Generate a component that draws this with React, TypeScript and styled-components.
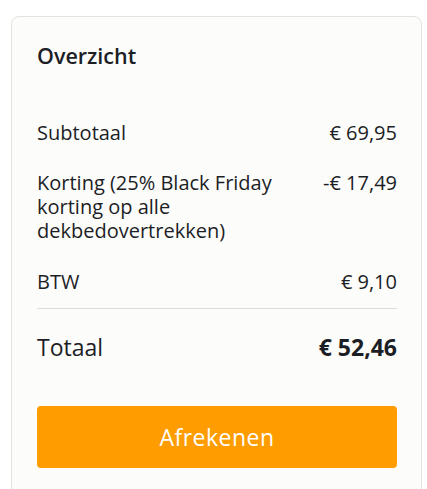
import React from "react";
import styled, { createGlobalStyle } from "styled-components";

const Global = createGlobalStyle`
  html, body { margin: 0; padding: 0; background: #ffffff; }
  body { font-family: "Open Sans", "Noto Sans", sans-serif; color: #1c1e26; }
  * { box-sizing: border-box; }
`;

const Page = styled.div`
  padding: 16px 5px 0 11px;
`;

const Card = styled.section`
  background: #fcfcfa;
  border: 1px solid #e2e2df;
  border-radius: 8px;
  padding: 24px 24px 40px 25px;
  min-height: 500px;
`;

const Title = styled.h2`
  margin: 0 0 49.5px 0;
  font-size: 21.5px;
  font-weight: 600;
  line-height: 30px;
`;

const Row = styled.div`
  display: flex;
  justify-content: space-between;
  align-items: flex-start;
  gap: 20px;
  font-size: 20px;
  line-height: 24.3px;
  margin-bottom: 26px;
`;

const TotalRow = styled(Row)`
  font-size: 23px;
  line-height: 30px;
  margin-bottom: 44.5px;
`;

const Label = styled.span`
  max-width: 260px;
`;

const Value = styled.span<{ $bold?: boolean }>`
  white-space: nowrap;
  font-weight: ${(p) => (p.$bold ? 700 : 400)};
`;

const Divider = styled.hr`
  border: none;
  border-top: 1px solid #dcdcd8;
  margin: -11.5px 0 22.5px 0;
`;

const Button = styled.button`
  display: block;
  width: 100%;
  height: 62px;
  border: none;
  border-radius: 4px;
  background: #ff9c00;
  color: #ffffff;
  font-family: inherit;
  font-size: 23px;
  letter-spacing: 0.5px;
  cursor: pointer;
`;

export default function App() {
  return (
    <>
      <Global />
      <Page>
        <Card>
          <Title>Overzicht</Title>
          <Row>
            <Label>Subtotaal</Label>
            <Value>€ 69,95</Value>
          </Row>
          <Row>
            <Label>Korting (25% Black Friday korting op alle dekbedovertrekken)</Label>
            <Value>-€ 17,49</Value>
          </Row>
          <Row>
            <Label>BTW</Label>
            <Value>€ 9,10</Value>
          </Row>
          <Divider />
          <TotalRow>
            <Label>Totaal</Label>
            <Value $bold>€ 52,46</Value>
          </TotalRow>
          <Button>Afrekenen</Button>
        </Card>
      </Page>
    </>
  );
}
